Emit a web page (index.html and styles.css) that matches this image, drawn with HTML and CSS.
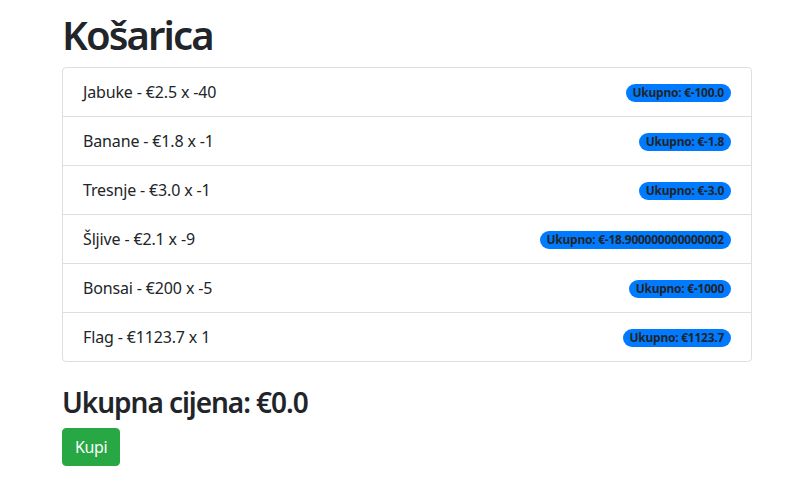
FILE: index.html
```html
<!DOCTYPE html>
<html lang="hr">
<head>
<meta charset="utf-8">
<title>Košarica</title>
<link rel="stylesheet" href="styles.css">
</head>
<body>
<div class="container">
  <h1 class="title">Košarica</h1>
  <ul class="list-group">
    <li class="list-item"><span>Jabuke - €2.5 x -40</span><span class="badge">Ukupno: €-100.0</span></li>
    <li class="list-item"><span>Banane - €1.8 x -1</span><span class="badge">Ukupno: €-1.8</span></li>
    <li class="list-item"><span>Tresnje - €3.0 x -1</span><span class="badge">Ukupno: €-3.0</span></li>
    <li class="list-item"><span>Šljive - €2.1 x -9</span><span class="badge">Ukupno: €-18.900000000000002</span></li>
    <li class="list-item"><span>Bonsai - €200 x -5</span><span class="badge">Ukupno: €-1000</span></li>
    <li class="list-item"><span>Flag - €1123.7 x 1</span><span class="badge">Ukupno: €1123.7</span></li>
  </ul>
  <h3 class="total">Ukupna cijena: €0.0</h3>
  <button class="btn-success" type="button">Kupi</button>
</div>
</body>
</html>
```
FILE: styles.css
```css
html, body {
  margin: 0;
  padding: 0;
  background: #fff;
}
body {
  font-family: "Noto Sans", "Open Sans", "Liberation Sans", sans-serif;
  font-size: 16px;
  line-height: 1.5;
  color: #212529;
}
.container {
  width: 690px;
  margin: 0 0 0 62px;
  padding-top: 11px;
}
.title {
  margin: 0 0 8px 0;
  font-size: 40px;
  font-weight: 600;
  line-height: 1.2;
  letter-spacing: -1.9px;
}
.list-group {
  list-style: none;
  margin: 0 0 24px 0;
  padding: 0;
  border: 1px solid rgba(0,0,0,.125);
  border-radius: 4px;
}
.list-item {
  display: flex;
  justify-content: space-between;
  align-items: center;
  padding: 12px 20px;
  border-top: 1px solid rgba(0,0,0,.125);
  letter-spacing: -0.15px;
}
.list-item:first-child {
  border-top: none;
}
.badge {
  display: inline-block;
  background: #007bff;
  color: #212529;
  font-size: 12px;
  font-weight: 700;
  line-height: 1;
  padding: 3px 7px;
  border-radius: 160px;
  white-space: nowrap;
  letter-spacing: -0.25px;
  position: relative;
  top: 1px;
}
.total {
  margin: 0 0 8px 0;
  font-size: 28px;
  font-weight: 600;
  line-height: 1.2;
  letter-spacing: -1.05px;
}
.btn-success {
  display: inline-block;
  font-family: inherit;
  font-size: 16px;
  line-height: 1.5;
  padding: 6px 12px;
  color: #fff;
  background: #28a745;
  border: 1px solid #28a745;
  border-radius: 4px;
  letter-spacing: -0.4px;
  cursor: pointer;
}
```
